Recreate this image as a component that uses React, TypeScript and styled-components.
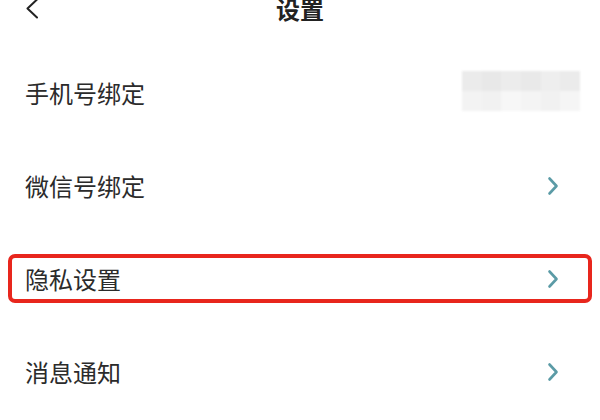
import React from 'react'
import styled, { createGlobalStyle } from 'styled-components'

const GlobalStyle = createGlobalStyle`
    html, body {
        margin: 0;
        padding: 0;
        background: #fff;
    }

    body {
        font-family: "Noto Sans CJK SC", "Noto Sans", sans-serif;
        color: #333;
    }
`

const Page = styled.div`
    width: 600px;
    height: 420px;
    overflow: hidden;
    background: #fff;
`

const Header = styled.div`
    display: grid;
    grid-template-columns: 1fr auto 1fr;
    align-items: center;
    height: 18px;
`

const BackButton = styled.div`
    display: flex;
    align-items: center;
    height: 18px;
    padding-left: 25px;
    color: #222;
`

const Title = styled.h1`
    margin: 0;
    font-size: 24px;
    line-height: 18px;
    font-weight: 700;
    color: #222;
`

const List = styled.div`
    display: flex;
    flex-direction: column;
    margin-top: 28px;
`

const Row = styled.div`
    display: flex;
    align-items: center;
    height: 93px;
    padding: 0 8px;
`

const RowInner = styled.div<{ $highlight?: boolean }>`
    flex: 1;
    display: flex;
    align-items: center;
    justify-content: space-between;
    box-sizing: border-box;
    height: 49px;
    padding: 0 29px 0 13px;
    border: 4px solid ${(p) => (p.$highlight ? '#e8261d' : 'transparent')};
    border-radius: 7px;
`

const Label = styled.span`
    font-size: 24px;
    line-height: 28px;
    color: #2b2b2b;
`

const Mosaic = styled.div`
    display: grid;
    grid-template-columns: repeat(6, 1fr);
    grid-template-rows: repeat(2, 1fr);
    width: 118px;
    height: 40px;
    margin-right: -21px;
    margin-top: -4px;
    filter: blur(1px);
`

const MosaicCell = styled.div<{ $tone: string }>`
    background: ${(p) => p.$tone};
`

const Chevron = styled.svg`
    display: block;
    color: #5b9ba6;
`

const mosaicTones = [
    '#ebebeb', '#e8e8e8', '#ececec', '#e9e9e9', '#eeeeee', '#ebebeb',
    '#f3f3f3', '#f1f1f1', '#f7f7f7', '#f4f4f4', '#f1f1f1', '#f5f5f5',
]

const rows = [
    { label: '手机号绑定', masked: true },
    { label: '微信号绑定' },
    { label: '隐私设置', highlight: true },
    { label: '消息通知' },
]

function ArrowRight(): JSX.Element {
    return (
        <Chevron width="12" height="20" viewBox="0 0 12 20" fill="none">
            <path d="M2.5 2.5 L9.5 10 L2.5 17.5" stroke="currentColor" strokeWidth="2.6" strokeLinecap="round" strokeLinejoin="round" />
        </Chevron>
    )
}

function App(): JSX.Element {
    return (
        <Page>
            <GlobalStyle />
            <Header>
                <BackButton>
                    <svg width="14" height="20" viewBox="0 0 14 20" fill="none">
                        <path d="M12 0.5 L2.5 9.5 L12 18.5" stroke="currentColor" strokeWidth="2" strokeLinecap="round" strokeLinejoin="round" />
                    </svg>
                </BackButton>
                <Title>设置</Title>
                <div />
            </Header>
            <List>
                {rows.map((row) => (
                    <Row key={row.label}>
                        <RowInner $highlight={row.highlight}>
                            <Label>{row.label}</Label>
                            {row.masked ? (
                                <Mosaic>
                                    {mosaicTones.map((tone, i) => (
                                        <MosaicCell key={i} $tone={tone} />
                                    ))}
                                </Mosaic>
                            ) : (
                                <ArrowRight />
                            )}
                        </RowInner>
                    </Row>
                ))}
            </List>
        </Page>
    )
}

export default App
